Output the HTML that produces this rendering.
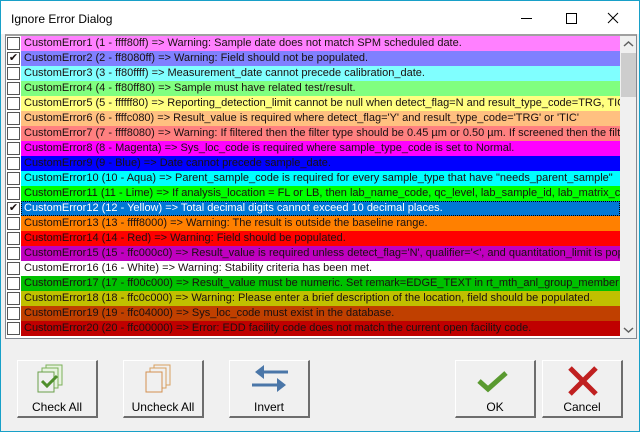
<!DOCTYPE html>
<html><head><style>
*{margin:0;padding:0;box-sizing:border-box}
body{width:640px;height:432px;overflow:hidden;background:#f0f0f0;font-family:"Liberation Sans",Arial,sans-serif;position:relative}
.win{position:absolute;left:0;top:0;width:640px;height:432px;border:1px solid #18a0c8;background:#f0f0f0}
.title{position:absolute;left:0;top:0;width:638px;height:33px;background:#fff;font-size:12px;color:#000}
.title .t{position:absolute;left:10px;top:11px}
.list{position:absolute;left:4px;top:33px;width:632px;height:305px;border:1px solid #828790;border-top:2px solid #a0a0a0;background:#fff;overflow:hidden}
.row{position:absolute;left:0;height:15px;width:614px;font-size:11px;line-height:15px;white-space:nowrap;color:#1a1010}
.cb{position:absolute;left:1px;top:1px;width:13px;height:13px;border:1px solid #555;background:#fff;font-size:11px;line-height:11px;text-align:center}
.lab{position:absolute;left:15px;top:0;height:15px;width:599px;padding-left:3px;overflow:hidden}
.sb{position:absolute;left:614px;top:0;width:17px;height:303px;background:#f0f0f0}
.thumb{position:absolute;left:1px;top:17px;width:15px;height:44px;background:#cdcdcd}
.btn{position:absolute;top:359px;width:81px;height:58px;background:#f0f0f0;border-top:1px solid #fff;border-left:1px solid #fff;border-right:2px solid #6d6d6d;border-bottom:2px solid #6d6d6d;font-size:12px;text-align:center}
.btn span{position:absolute;left:0;right:0;top:39px}
.btn svg{position:absolute;left:0;top:0}
</style></head><body>
<div class="win">
<div class="title"><span class="t">Ignore Error Dialog</span>
<svg width="640" height="33" style="position:absolute;left:0;top:0"><line x1="520" y1="17.5" x2="531" y2="17.5" stroke="#000"/><rect x="565.5" y="12.5" width="10" height="10" fill="none" stroke="#000"/><path d="M607 12 L617 22 M617 12 L607 22" stroke="#000"/></svg></div>
<div class="list">
<div class="row" style="top:0"><div class="cb"></div><div class="lab" style="background:#ff80ff">CustomError1 (1 - ffff80ff) =&gt; Warning: Sample date does not match SPM scheduled date.</div></div>
<div class="row" style="top:15px"><div class="cb">✔</div><div class="lab" style="background:#8080ff">CustomError2 (2 - ff8080ff) =&gt; Warning: Field should not be populated.</div></div>
<div class="row" style="top:30px"><div class="cb"></div><div class="lab" style="background:#80ffff">CustomError3 (3 - ff80ffff) =&gt; Measurement_date cannot precede calibration_date.</div></div>
<div class="row" style="top:45px"><div class="cb"></div><div class="lab" style="background:#80ff80">CustomError4 (4 - ff80ff80) =&gt; Sample must have related test/result.</div></div>
<div class="row" style="top:60px"><div class="cb"></div><div class="lab" style="background:#ffff80">CustomError5 (5 - ffffff80) =&gt; Reporting_detection_limit cannot be null when detect_flag=N and result_type_code=TRG, TIC</div></div>
<div class="row" style="top:75px"><div class="cb"></div><div class="lab" style="background:#ffc080">CustomError6 (6 - ffffc080) =&gt; Result_value is required where detect_flag='Y' and result_type_code='TRG' or 'TIC'</div></div>
<div class="row" style="top:90px"><div class="cb"></div><div class="lab" style="background:#ff8080">CustomError7 (7 - ffff8080) =&gt; Warning: If filtered then the filter type should be 0.45 µm or 0.50 µm. If screened then the filter</div></div>
<div class="row" style="top:105px"><div class="cb"></div><div class="lab" style="background:#ff00ff">CustomError8 (8 - Magenta) =&gt; Sys_loc_code is required where sample_type_code is set to Normal.</div></div>
<div class="row" style="top:120px"><div class="cb"></div><div class="lab" style="background:#0000ff">CustomError9 (9 - Blue) =&gt; Date cannot precede sample_date.</div></div>
<div class="row" style="top:135px"><div class="cb"></div><div class="lab" style="background:#00ffff">CustomError10 (10 - Aqua) =&gt; Parent_sample_code is required for every sample_type that have "needs_parent_sample"</div></div>
<div class="row" style="top:150px"><div class="cb"></div><div class="lab" style="background:#00ff00">CustomError11 (11 - Lime) =&gt; If analysis_location = FL or LB, then lab_name_code, qc_level, lab_sample_id, lab_matrix_code</div></div>
<div class="row" style="top:165px"><div class="cb">✔</div><div class="lab" style="background:#0078d7;color:#fff;outline:1px dotted #000;outline-offset:-1px">CustomError12 (12 - Yellow) =&gt; Total decimal digits cannot exceed 10 decimal places.</div></div>
<div class="row" style="top:180px"><div class="cb"></div><div class="lab" style="background:#ff8000">CustomError13 (13 - ffff8000) =&gt; Warning: The result is outside the baseline range.</div></div>
<div class="row" style="top:195px"><div class="cb"></div><div class="lab" style="background:#ff0000">CustomError14 (14 - Red) =&gt; Warning: Field should be populated.</div></div>
<div class="row" style="top:210px"><div class="cb"></div><div class="lab" style="background:#c000c0">CustomError15 (15 - ffc000c0) =&gt; Result_value is required unless detect_flag='N', qualifier='&lt;', and quantitation_limit is populated</div></div>
<div class="row" style="top:225px"><div class="cb"></div><div class="lab" style="background:#fff">CustomError16 (16 - White) =&gt; Warning: Stability criteria has been met.</div></div>
<div class="row" style="top:240px"><div class="cb"></div><div class="lab" style="background:#00c000">CustomError17 (17 - ff00c000) =&gt; Result_value must be numeric. Set remark=EDGE_TEXT in rt_mth_anl_group_member</div></div>
<div class="row" style="top:255px"><div class="cb"></div><div class="lab" style="background:#c0c000">CustomError18 (18 - ffc0c000) =&gt; Warning: Please enter a brief description of the location, field should be populated.</div></div>
<div class="row" style="top:270px"><div class="cb"></div><div class="lab" style="background:#c04000">CustomError19 (19 - ffc04000) =&gt; Sys_loc_code must exist in the database.</div></div>
<div class="row" style="top:285px"><div class="cb"></div><div class="lab" style="background:#c00000">CustomError20 (20 - ffc00000) =&gt; Error: EDD facility code does not match the current open facility code.</div></div>
<div class="sb"><div class="thumb"></div>
<svg width="17" height="303" style="position:absolute;left:0;top:0"><path d="M4 10 L8.5 6 L13 10" fill="none" stroke="#606060" stroke-width="1.5"/><path d="M4 292 L8.5 296 L13 292" fill="none" stroke="#606060" stroke-width="1.5"/></svg></div>
</div>

<div class="btn" style="left:16px"><svg width="80" height="40"><rect x="28" y="4" width="16" height="20" fill="#e8f3e0" stroke="#7cb05a"/><rect x="24" y="7" width="16" height="20" fill="#e8f3e0" stroke="#7cb05a"/><rect x="20" y="11" width="16" height="20" fill="#f0f0f0" stroke="#6aa04a"/><path d="M24 20 L29 25 L39 15" fill="none" stroke="#4f8f2c" stroke-width="3"/></svg><span>Check All</span></div>
<div class="btn" style="left:122px"><svg width="80" height="40"><rect x="30" y="4" width="16" height="20" fill="#f0f0f0" stroke="#d8a060"/><rect x="26" y="7" width="16" height="20" fill="#f0f0f0" stroke="#d8a060"/><rect x="22" y="11" width="16" height="20" fill="#f0f0f0" stroke="#d39050"/></svg><span>Uncheck All</span></div>
<div class="btn" style="left:228px"><svg width="80" height="40"><path d="M34 11 H58" stroke="#4a76a8" stroke-width="3"/><path d="M25 11 L34 4 L34 18 Z" fill="#4a76a8"/><path d="M22 24 H47" stroke="#4a76a8" stroke-width="3"/><path d="M56 24 L47 17 L47 31 Z" fill="#4a76a8"/></svg><span>Invert</span></div>
<div class="btn" style="left:454px"><svg width="80" height="40"><path d="M23 20 L32 28 L50 12" fill="none" stroke="#5a9a30" stroke-width="5"/></svg><span>OK</span></div>
<div class="btn" style="left:541px"><svg width="80" height="40"><path d="M27 7 L53 33 M53 7 L27 33" stroke="#c02020" stroke-width="5"/></svg><span>Cancel</span></div>
</div>
</body></html>
